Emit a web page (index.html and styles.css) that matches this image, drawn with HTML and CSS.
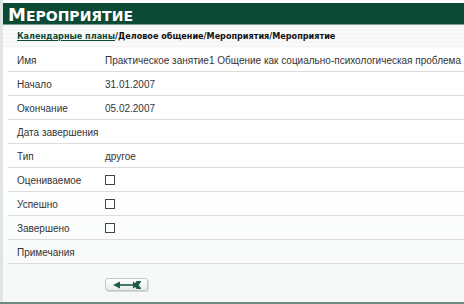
FILE: index.html
```html
<!DOCTYPE html>
<html lang="ru">
<head>
  <meta charset="UTF-8" />
  <title>Мероприятие</title>
  <link rel="stylesheet" href="styles.css">
</head>
<body>
  <div class="page">
    <div class="title-bar">
      <h1><span class="cap">М</span>ероприятие</h1>
    </div>

    <div class="crumbs">
      <a href="#">Календарные планы</a>/Деловое общение/Мероприятия/Мероприятие
    </div>

    <table class="details">
      <tr><td class="label">Имя</td><td>Практическое занятие1 Общение как социально-психологическая проблема</td></tr>
      <tr><td class="label">Начало</td><td>31.01.2007</td></tr>
      <tr><td class="label">Окончание</td><td>05.02.2007</td></tr>
      <tr><td class="label">Дата завершения</td><td></td></tr>
      <tr><td class="label">Тип</td><td>другое</td></tr>
      <tr><td class="label">Оцениваемое</td><td><span class="check"></span></td></tr>
      <tr><td class="label">Успешно</td><td><span class="check"></span></td></tr>
      <tr><td class="label">Завершено</td><td><span class="check"></span></td></tr>
      <tr><td class="label">Примечания</td><td></td></tr>
    </table>

    <div class="actions">
      <button class="back-btn" type="button" title="Назад">
        <svg width="28" height="8" viewBox="0 0 28 8">
          <polygon points="0,4 7,0.5 7,7.5" fill="#1f5c45"/>
          <rect x="6" y="3.2" width="17" height="1.6" fill="#1f5c45"/>
          <path d="M20 1 L23 4 L20 7 M24 0.5 L27.5 0.5 L25 4 L27.5 7.5 L24 7.5 L21.5 4 Z" stroke="#1f5c45" stroke-width="1.2" fill="#1f5c45"/>
        </svg>
      </button>
    </div>
  </div>
  <div class="footer-line"></div>
</body>
</html>
```

FILE: styles.css
```css
body, html {
  margin: 0;
  padding: 0;
  font-family: "Liberation Sans", Arial, sans-serif;
  background: #dfe6e3;
  color: #333;
}

.page {
  margin-left: 3px;
  padding-top: 3px;
  background: linear-gradient(#ffffff 60%, #f4f8f7);
  height: 299px;
  overflow: hidden;
}

.title-bar {
  background-color: #0b4a35;
  height: 21px;
  border-bottom: 1px solid #7d9e92;
}

.title-bar h1 {
  margin: 0;
  padding-left: 5px;
  font-family: "DejaVu Sans", Verdana, sans-serif;
  font-weight: bold;
  font-size: 14px;
  line-height: 23px;
  text-transform: uppercase;
  color: white;
}

.title-bar .cap {
  font-size: 18px;
}

.crumbs {
  height: 23px;
  line-height: 22px;
  padding-left: 14px;
  font-family: "DejaVu Sans Condensed", "DejaVu Sans", Verdana, sans-serif;
  font-stretch: condensed;
  font-weight: bold;
  font-size: 9px;
  color: #111;
  background: repeating-linear-gradient(#f6f6f6 0, #f6f6f6 2px, #fbfbfb 2px, #fbfbfb 4px);
}

.crumbs a {
  color: #0b4a35;
  text-decoration: underline;
}

.details {
  width: 100%;
  margin-left: 5px;
  border-collapse: collapse;
  font-size: 10px;
}

.details td {
  height: 22px;
  padding: 1px 0 0 0;
  border-bottom: 1px solid #dcdcdc;
  white-space: nowrap;
}

.details .label {
  width: 88px;
  padding-left: 9px;
}

.check {
  display: inline-block;
  width: 8px;
  height: 8px;
  border: 1px solid #444;
  vertical-align: -1px;
}

.actions {
  padding: 14px 0 0 102px;
}

.back-btn {
  width: 43px;
  height: 13px;
  padding: 0;
  display: flex;
  align-items: center;
  justify-content: center;
  border: 1px solid #c2c7c5;
  border-radius: 3px;
  background: linear-gradient(#ffffff, #e8ebea);
  box-shadow: 1px 1px 0 #d3d7d5;
}

.footer-line {
  position: fixed;
  left: 0;
  right: 0;
  bottom: 0;
  height: 2px;
  background: #6f8a80;
}
```
